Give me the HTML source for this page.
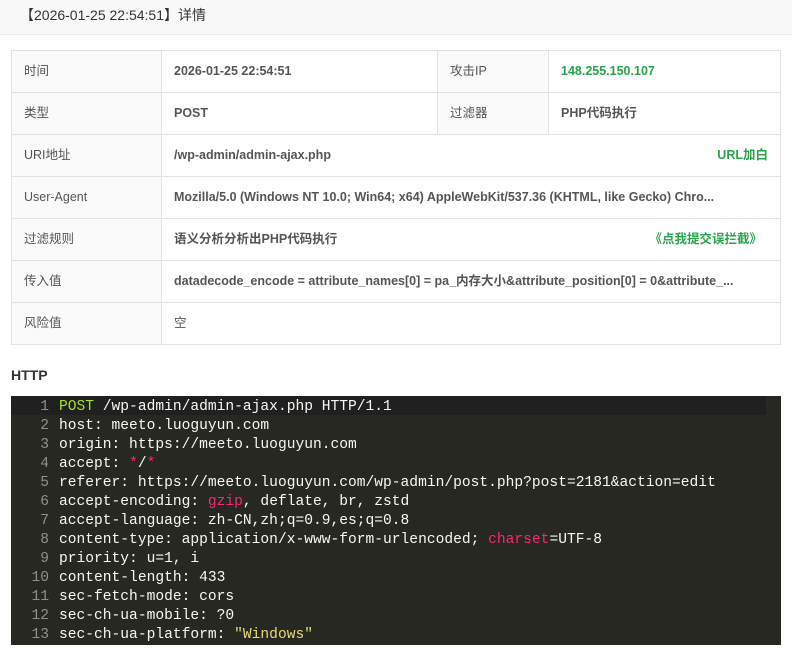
<!DOCTYPE html>
<html><head><meta charset="utf-8"><style>
body{margin:0;width:792px;height:657px;background:#fff;font-family:"Liberation Sans","Noto Sans CJK SC",sans-serif;color:#333;overflow:hidden;position:relative}
.hd{position:absolute;left:0;top:0;width:792px;height:34px;background:#f8f8f8;border-bottom:1px solid #eee;font-size:14px;line-height:30px;color:#333}
.hd span{position:absolute;left:20px;top:0}
table{position:absolute;left:11px;top:50px;width:770px;border-collapse:collapse;font-size:12.5px;table-layout:fixed}
td{border:1px solid #e2e2e2;height:41px;padding:0 12px;white-space:nowrap;overflow:hidden;text-overflow:ellipsis;line-height:41px}
td.l{background:#fafafa;color:#555}
td.v{font-weight:bold;color:#555}
.g{color:#2aa44a;font-weight:bold}
.fr{float:right}
.h{position:absolute;left:11px;top:367px;font-weight:bold;font-size:14px;color:#333}
.code{position:absolute;left:11px;top:396px;width:770px;height:249px;background:#272822;font-family:"Liberation Mono",monospace;font-size:14.6px;color:#f8f8f2}
.ln{height:19px;line-height:19px;position:relative;white-space:pre}
.ln .n{position:absolute;left:0;top:2px;width:38px;text-align:right;color:#8f908a}
.ln .t{position:absolute;left:48px;top:2px}
.ln.a{background:#202020;width:755px}
.k{color:#a6e22e}.r{color:#f92672}.y{color:#e6db74}
</style></head><body>
<div class="hd"><span>【2026-01-25 22:54:51】详情</span></div>
<table>
<colgroup><col style="width:150px"><col style="width:276px"><col style="width:111px"><col></colgroup>
<tr><td class="l">时间</td><td class="v">2026-01-25 22:54:51</td><td class="l">攻击IP</td><td class="g">148.255.150.107</td></tr>
<tr><td class="l">类型</td><td class="v">POST</td><td class="l">过滤器</td><td class="v">PHP代码执行</td></tr>
<tr><td class="l">URI地址</td><td colspan="3" class="v"><span class="g fr">URL加白</span>/wp-admin/admin-ajax.php</td></tr>
<tr><td class="l">User-Agent</td><td colspan="3" class="v">Mozilla/5.0 (Windows NT 10.0; Win64; x64) AppleWebKit/537.36 (KHTML, like Gecko) Chro...</td></tr>
<tr><td class="l">过滤规则</td><td colspan="3" class="v"><span class="g fr" style="margin-right:6px">《点我提交误拦截》</span>语义分析分析出PHP代码执行</td></tr>
<tr><td class="l">传入值</td><td colspan="3" class="v">datadecode_encode = attribute_names[0] = pa_内存大小&amp;attribute_position[0] = 0&amp;attribute_...</td></tr>
<tr><td class="l">风险值</td><td colspan="3" class="v" style="font-weight:normal">空</td></tr>
</table>
<div class="h">HTTP</div>
<div class="code">
<div class="ln a"><span class="n">1</span><span class="t"><span class="k">POST</span> /wp-admin/admin-ajax.php HTTP/1.1</span></div>
<div class="ln"><span class="n">2</span><span class="t">host: meeto.luoguyun.com</span></div>
<div class="ln"><span class="n">3</span><span class="t">origin: https://meeto.luoguyun.com</span></div>
<div class="ln"><span class="n">4</span><span class="t">accept: <span class="r">*</span>/<span class="r">*</span></span></div>
<div class="ln"><span class="n">5</span><span class="t">referer: https://meeto.luoguyun.com/wp-admin/post.php?post=2181&amp;action=edit</span></div>
<div class="ln"><span class="n">6</span><span class="t">accept-encoding: <span class="r">gzip</span>, deflate, br, zstd</span></div>
<div class="ln"><span class="n">7</span><span class="t">accept-language: zh-CN,zh;q=0.9,es;q=0.8</span></div>
<div class="ln"><span class="n">8</span><span class="t">content-type: application/x-www-form-urlencoded; <span class="r">charset</span>=UTF-8</span></div>
<div class="ln"><span class="n">9</span><span class="t">priority: u=1, i</span></div>
<div class="ln"><span class="n">10</span><span class="t">content-length: 433</span></div>
<div class="ln"><span class="n">11</span><span class="t">sec-fetch-mode: cors</span></div>
<div class="ln"><span class="n">12</span><span class="t">sec-ch-ua-mobile: ?0</span></div>
<div class="ln"><span class="n">13</span><span class="t">sec-ch-ua-platform: <span class="y">"Windows"</span></span></div>
</div>
</body></html>
